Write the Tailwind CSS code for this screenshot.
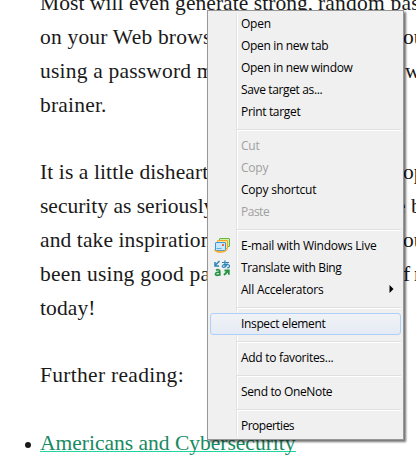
<!DOCTYPE html>
<html lang="en">
<head>
<meta charset="utf-8">
<title>Article</title>
<script src="https://cdn.jsdelivr.net/npm/@tailwindcss/browser@4"></script>
</head>
<body class="bg-white overflow-hidden">
<div class="relative w-[416px] h-[470px] overflow-hidden">
  <article class="-mt-[13px] pl-10 font-['Liberation_Serif',serif] text-[21.5px] leading-[33.85px] text-[#1a1a1a] whitespace-nowrap">
    <p class="mb-[33.85px]">
      <span class="flex"><span class="shrink-0 w-[278px] tracking-[0.05px]">Most will even generate strong,</span><span class="tracking-[0.2px]">random pas</span></span>
      <span class="flex"><span class="shrink-0 w-[363px] tracking-[0.2px]">on your Web brows</span><span>ou</span></span>
      <span class="flex"><span class="shrink-0 w-[365px] tracking-[0.2px]">using a password m</span><span>w</span></span>
      <span class="block tracking-[0.2px]">brainer.</span>
    </p>
    <p class="mb-[33.85px]">
      <span class="flex"><span class="shrink-0 w-[363px] tracking-[0.1px]">It is a little disheart</span><span>op</span></span>
      <span class="flex"><span class="shrink-0 w-[356px]">security as seriously</span><span>e b</span></span>
      <span class="flex"><span class="shrink-0 w-[363px] tracking-[0.1px]">and take inspiration</span><span>ou</span></span>
      <span class="flex"><span class="shrink-0 w-[363px] tracking-[0.2px]">been using good pa</span><span class="tracking-[-0.8px]">f n</span></span>
      <span class="block tracking-[0.1px]">today!</span>
    </p>
    <p class="mb-[33.85px] tracking-[0.3px]">Further reading:</p>
    <ul><li class="relative"><span class="absolute -left-[15px] top-[15px] size-[6px] rounded-full bg-[#1a1a1a]"></span><a class="text-[#168a62] border-b border-[#20d6a0] leading-none inline-block h-[19px]">Americans and Cybersecurity</a></li></ul>
  </article>

  <nav class="absolute left-[207px] top-[10px] w-[197px] h-[430px] border border-[#979797] bg-[#f0f0f0] py-[2px] shadow-[2px_2px_2px_rgba(0,0,0,0.55)] font-['Open_Sans',sans-serif] text-[12px] tracking-[-0.22px] leading-[22px] text-black whitespace-nowrap">
    <div class="absolute left-[28px] top-[2px] bottom-[2px] w-[2px] bg-white border-l border-[#e2e3e3]"></div>
    <div class="relative">
      <div class="h-[22px] pl-[33px]">Open</div>
      <div class="h-[22px] pl-[33px] tracking-[-0.33px]">Open in new tab</div>
      <div class="h-[22px] pl-[33px] tracking-[-0.33px]">Open in new window</div>
      <div class="h-[22px] pl-[33px] tracking-[-0.36px]">Save target as...</div>
      <div class="h-[22px] pl-[33px] tracking-[-0.33px]">Print target</div>
      <div class="h-[12px] pt-[6px] pl-[29px] pr-[2px]"><div class="h-[2px] bg-white border-t border-[#e0e0e0]"></div></div>
      <div class="h-[22px] pl-[33px] text-[#a0a0a0]">Cut</div>
      <div class="h-[22px] pl-[33px] text-[#a0a0a0]">Copy</div>
      <div class="h-[22px] pl-[33px]">Copy shortcut</div>
      <div class="h-[22px] pl-[33px] text-[#a0a0a0] tracking-[-0.5px]">Paste</div>
      <div class="h-[12px] pt-[6px] pl-[29px] pr-[2px]"><div class="h-[2px] bg-white border-t border-[#e0e0e0]"></div></div>
      <div class="flex h-[22px]"><span class="w-[33px] pl-[6px] pt-[3px]">
        <svg width="16" height="16" viewBox="0 0 16 16"><rect x="5.5" y=".5" width="10" height="8" rx=".5" fill="#d5efb0" stroke="#64b834"/><rect x="3.5" y="2.500" width="10" height="8" rx=".5" fill="#ffe0a0" stroke="#f5a51d"/><rect x="1.500" y="4.500" width="10" height="8" rx=".5" fill="#c9e8fb" stroke="#3c9ad8"/><path d="M2.500 10.500h5" stroke="#5fb0e6"/><rect x="8" y="6" width="2" height="2" fill="#f06a32"/><path d="M0 12C3 15.500 10 15.500 13.500 11.500C11 13.500 5 14 0 12Z" fill="#f9b62f" stroke="#f5a51d" stroke-width=".6"/></svg></span><span>E-mail with Windows Live</span></div>
      <div class="flex h-[22px]"><span class="w-[33px] pl-[6px] pt-[3px]">
        <svg width="17" height="17" viewBox="0 0 17 17"><path d="M5.500 1L1.500 5M1 2v4h4" fill="none" stroke="#2b84b7" stroke-width="1.500"/><path d="M8 2.500h7M11 .3C10.500 3 10.700 5 11.500 7.500M13.500 3.500C12.500 6 10.500 7.500 9 7.300C7.300 6.800 8.500 4.700 11 4.400C14 4 16 5 15.500 6.500C15.200 7.500 14 8 13 8" fill="none" stroke="#2b84b7" stroke-width="1.150"/><path d="M2 10.200C3.500 9.400 5.800 9.300 5.800 11.500V15.800M5.800 12.200C3.500 12 1.500 12.500 1.500 14C1.500 15.900 4.800 15.700 5.800 13.800" fill="none" stroke="#269344" stroke-width="1.700"/><path d="M10 15l4-4M10.500 10.500h4.300v4.300" fill="none" stroke="#269344" stroke-width="1.800"/></svg></span><span class="tracking-[-0.33px]">Translate with Bing</span></div>
      <div class="flex h-[22px] pl-[33px] pr-[9px] justify-between"><span>All Accelerators</span><svg class="mt-[6px]" width="5" height="8" viewBox="0 0 5 8"><path d="M.5 0v8l4-4z"/></svg></div>
      <div class="h-[12px] pt-[6px] pl-[29px] pr-[2px]"><div class="h-[2px] bg-white border-t border-[#e0e0e0]"></div></div>
      <div class="h-[22px] mx-[2px] pl-[30px] leading-[20px] rounded-[3px] border border-[#aecff7] bg-linear-to-b from-[#f0f2f5] to-[#e5ebf4] tracking-[-0.35px]">Inspect element</div>
      <div class="h-[12px] pt-[6px] pl-[29px] pr-[2px]"><div class="h-[2px] bg-white border-t border-[#e0e0e0]"></div></div>
      <div class="h-[22px] pl-[33px] tracking-[-0.3px]">Add to favorites...</div>
      <div class="h-[12px] pt-[6px] pl-[29px] pr-[2px]"><div class="h-[2px] bg-white border-t border-[#e0e0e0]"></div></div>
      <div class="h-[22px] pl-[33px] tracking-[-0.35px]">Send to OneNote</div>
      <div class="h-[12px] pt-[6px] pl-[29px] pr-[2px]"><div class="h-[2px] bg-white border-t border-[#e0e0e0]"></div></div>
      <div class="h-[22px] pl-[33px] tracking-[-0.5px]">Properties</div>
    </div>
  </nav>
</div>
</body>
</html>
